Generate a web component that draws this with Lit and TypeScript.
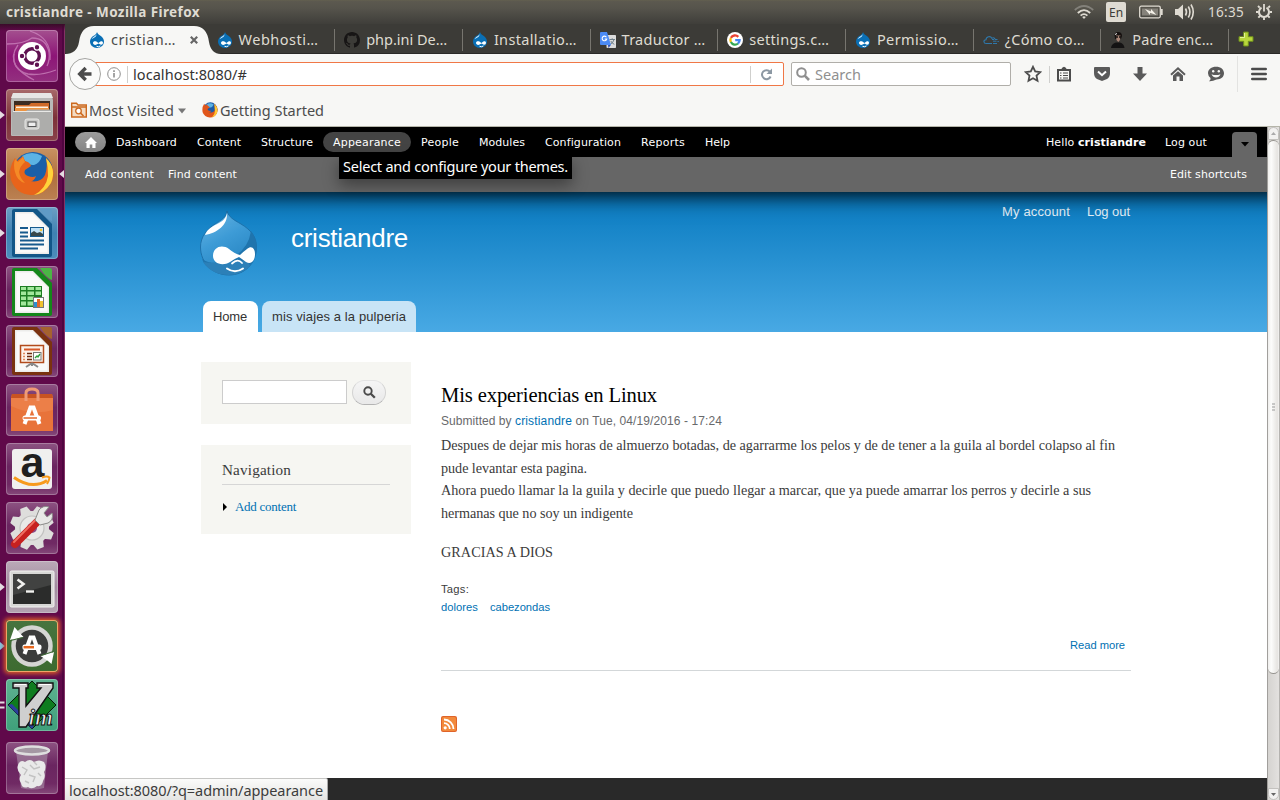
import { LitElement, html, svg, css, nothing } from "lit";
import { customElement, property } from "lit/decorators.js";
import { classMap } from "lit/directives/class-map.js";

/** Inline text whose tracking is adjusted so that the line fills an exact width. */
@customElement("fit-text")
class FitText extends LitElement {
  @property({ type: Number }) w = 0;
  static styles = css`
    :host { display: inline-block; white-space: pre; }
  `;
  firstUpdated() {
    const natural = this.getBoundingClientRect().width;
    const count = (this.textContent || "").length;
    if (this.w && count) {
      this.style.letterSpacing = ((this.w - natural) / count).toFixed(3) + "px";
      this.style.width = this.w + "px";
    }
  }
  render() {
    return html`<slot></slot>`;
  }
}

const t = (text: string, w: number) => html`<fit-text w=${w}>${text}</fit-text>`;

const dropIcon = html`<svg width="16" height="16" viewBox="0 0 16 16">
  <path d="M8 0C8.600 2 10 2.700 11.500 3.800C13.800 5.400 15 7.300 15 9.600C15 13.300 12 16 8 16C4 16 1 13.300 1 9.600C1 7 2.500 5 4.600 3.800C6 3 7.700 2 8 0Z" fill="#0a6fb5"/>
  <path d="M7.400 2.200C7 3.900 3.500 4.800 2.600 7.200C4.500 5.600 7.800 5 7.400 2.200Z" fill="#d8f0ff"/>
  <path d="M4 10.800C4 9.200 6 8.800 7.400 9.600L9.400 11L11.400 9.600C12.600 8.800 14 9.300 14 10.800C14 12.400 12.400 13.200 11.400 12.400L9.600 11.500L7.600 12.600C6 13.400 4 12.700 4 10.800Z" fill="#fff"/>
  <path d="M7.500 14.300Q9.700 15.400 11.400 13.900" stroke="#fff" stroke-width="1" fill="none"/>
</svg>`;

const githubIcon = html`<svg width="16" height="16" viewBox="0 0 16 16"><path fill="#171515" d="M8 0C3.580 0 0 3.580 0 8c0 3.540 2.290 6.530 5.470 7.590.4.070.55-.17.55-.38 0-.19-.01-.82-.01-1.490-2.010.37-2.530-.49-2.690-.94-.09-.23-.48-.94-.82-1.130-.28-.15-.68-.52-.01-.53.63-.01 1.080.58 1.230.82.72 1.210 1.870.87 2.330.66.07-.52.28-.87.51-1.070-1.780-.2-3.640-.89-3.640-3.950 0-.87.31-1.590.82-2.150-.08-.2-.36-1.020.08-2.120 0 0 .67-.21 2.200.82.64-.18 1.320-.27 2-.27s1.360.09 2 .27c1.530-1.040 2.200-.82 2.200-.82.44 1.100.16 1.920.08 2.120.51.56.82 1.270.82 2.150 0 3.070-1.870 3.750-3.650 3.950.29.25.54.73.54 1.480 0 1.070-.01 1.930-.01 2.200 0 .21.15.46.55.38A8.010 8.010 0 0 0 16 8c0-4.420-3.580-8-8-8z"/></svg>`;

const translateIcon = html`<svg width="16" height="16" viewBox="0 0 16 16">
  <rect x="6.500" y="3" width="9.500" height="13" rx=".8" fill="#dcdcdc"/>
  <path d="M9.500 7.500H15M12.200 6.300V7.500M14 7.700Q13 11 10.200 12.300M10.800 9Q12 11.500 14.300 12.300" stroke="#6e7f8a" fill="none"/>
  <path d="M8 13H10.800L8.500 16Z" fill="#2c4fb5"/>
  <path d="M1 0H7L11 13H1Q0 13 0 12V1Q0 0 1 0Z" fill="#4c8bf5"/>
  <path d="M6.400 5.200A2.300 2.300 0 1 0 6.700 7H4.700" stroke="#fff" stroke-width="1.100" fill="none"/>
</svg>`;

const googleIcon = html`<svg width="16" height="16" viewBox="0 0 16 16">
  <circle cx="8" cy="8" r="8" fill="#fff"/>
  <g fill="none" stroke-width="2.300">
    <path d="M11.300 4.900A4.600 4.600 0 0 0 3.900 5.900" stroke="#ea4335"/>
    <path d="M3.900 5.900A4.600 4.600 0 0 0 3.900 10.100" stroke="#fbbc05"/>
    <path d="M3.900 10.100A4.600 4.600 0 0 0 11 11.500" stroke="#34a853"/>
    <path d="M11 11.500A4.500 4.500 0 0 0 12.600 8.100H8.200" stroke="#4285f4"/>
  </g>
</svg>`;

const cloudIcon = html`<svg width="16" height="16" viewBox="0 0 16 16">
  <path d="M9 11.500H3.200C.4 11.500 0 8.200 3 7.800C3 4.500 7.500 3.500 8.800 6.200C10.500 5.300 12 6 12 7.500" fill="none" stroke="#2f78ab" stroke-width="1.100"/>
  <path d="M9 7.500H11M10 9.200H13.500M12 7.500H14.500M14 11.500H10M14.500 9.500H15.800" stroke="#2f78ab" stroke-width="1"/>
</svg>`;

const personIcon = html`<svg width="16" height="16" viewBox="0 0 16 16">
  <path d="M1 16Q1.500 11.500 6 10.500L10 10.500Q14 11.500 14.500 16Z" fill="#141313"/>
  <path d="M4.500 3Q5 0 8 0Q12 0 12 4L11 7H5Z" fill="#15100f"/>
  <path d="M6 3.500H10.500L10 8L8.300 10L6.500 8Z" fill="#a98576"/>
  <path d="M5.500 5H8M9 5H11" stroke="#111" stroke-width="1.600"/>
  <path d="M5 2.500L7 1.500" stroke="#eee"/>
</svg>`;

const tabs = [
  { label: "Webhosti…", w: 80, icon: dropIcon },
  { label: "php.ini De…", w: 81, icon: githubIcon },
  { label: "Installatio…", w: 83, icon: dropIcon },
  { label: "Traductor …", w: 84, icon: translateIcon },
  { label: "settings.c…", w: 80, icon: googleIcon },
  { label: "Permissio…", w: 82, icon: dropIcon },
  { label: "¿Cómo co…", w: 80, icon: cloudIcon },
  { label: "Padre enc…", w: 81, icon: personIcon },
];

const glyph = (body: unknown) => html`<svg width="52" height="52" viewBox="0 0 52 52">${body}</svg>`;

const sheet = (frame: string, fold: string, body: unknown) => glyph(svg`
  <path d="M8 2H31L46 17V48Q46 50 44 50H8Q6 50 6 48V4Q6 2 8 2Z" fill=${frame}/>
  <path d="M34 2H44Q46 2 46 4V14Q40 12 34 2Z" fill=${fold}/>
  <path d="M9 5H27L43 21V47H9Z" fill="#ececea"/>
  <path d="M10.500 6.500H26.500L41.500 21.500V45.500H10.500Z" fill="#fafaf9"/>
  ${body}`);

const launcherItems = [
  {
    name: "dash", bg: "linear-gradient(#a4508f,#8d1577 50%,#93307f)", run: "",
    icon: glyph(svg`
      <g fill="none" stroke="#d08bc2" stroke-width="1.300" opacity=".7">
        <path d="M1 14Q18 14 26 8Q40 8 43 22Q44 30 41 36"/><path d="M24 1Q46 8 44 30"/><path d="M8 24Q6 40 22 44Q34 46 50 40"/><path d="M12 15Q4 26 10 36Q16 44 28 50"/>
      </g>
      <circle cx="26" cy="26" r="14" fill="#fff"/>
      <circle cx="26" cy="26" r="7.300" fill="none" stroke="#5e1150" stroke-width="3.400"/>
      <g fill="#5e1150" stroke="#fff" stroke-width="1.200"><circle cx="16" cy="26" r="2.800"/><circle cx="31" cy="17.300" r="2.800"/><circle cx="31" cy="34.700" r="2.800"/></g>`),
  },
  {
    name: "files", bg: "linear-gradient(#a86a6a,#7d3139 55%,#8a424a)", run: "on",
    icon: glyph(svg`
      <path d="M7 4H45L47 11V46Q47 47 46 47H6Q5 47 5 46V11Z" fill="#b9b9b7"/>
      <path d="M7 4H45L47 9H5Z" fill="#e6e6e4"/>
      <rect x="8" y="12" width="36" height="10" fill="#3c2c22"/>
      <path d="M9 16H23L25 14H43V22H9Z" fill="#cf6a28"/>
      <path d="M10 17.500H42V19H10Z" fill="#fff3e2"/><path d="M9 19H43V22H9Z" fill="#ee9440"/>
      <path d="M6 22H20L22 20.500H44L46 22V46H6Z" fill="#adadab"/><path d="M7 22.500H45" stroke="#e8e8e6"/>
      <rect x="19" y="30" width="14" height="10" rx="2" fill="#c9c9c7" stroke="#e7e7e5"/>
      <rect x="22" y="33" width="8" height="4.500" fill="#eee" stroke="#555"/>`),
  },
  {
    name: "firefox", bg: "linear-gradient(#c89262,#b0703f 55%,#bb8152)", run: "both",
    icon: glyph(svg`
      <circle cx="27" cy="24" r="20" fill="#1a5fa8"/>
      <path d="M16 8Q26 2 36 8Q34 15 28 17Q20 18 16 8Z" fill="#5cb3e4"/>
      <path d="M40 10Q52 22 45 35Q38 48 25 47Q10 46 5 32Q2 20 9 10L11 13L17 8L19 13Q24 14 25 18L19 22Q17 26 22 28Q27 30 30 28Q28 34 24 33Q35 35 39 27Q42 18 40 10Z" fill="#e8641b"/>
      <path d="M40 10Q51 21 45 35Q38 46 28 47Q40 41 42 28Q42 18 40 10Z" fill="#ffd23a"/>
      <path d="M9 11L12 14L17 9L19 14Q14 18 13 24Q14 30 19 35Q11 33 9 24Q7 17 9 11Z" fill="#f58a26"/>`),
  },
  {
    name: "writer", bg: "linear-gradient(#6d9fc4,#3f82b3 50%,#4c8dbb)", run: "on",
    icon: sheet("#125687", "#5f9bc6", svg`
      <path d="M14 21H22M14 25.500H22M14 29.500H22M14 33.500H38M14 37.500H38M14 41.500H32" stroke="#175a8d" stroke-width="2"/>
      <rect x="24.500" y="20.500" width="13" height="9" fill="#bfe0f5" stroke="#175a8d"/>
      <path d="M25 29V26L28 24L31 26L34 25L37 27V29Z" fill="#37474b"/><circle cx="35" cy="23" r="1.300" fill="#f4c435"/>`),
  },
  {
    name: "calc", bg: "", run: "",
    icon: sheet("#14861a", "#4bb545", svg`
      <rect x="14" y="20" width="22" height="21" fill="#1d7d22"/>
      <path d="M15 21H20V24H15ZM21.500 21H28V24H21.500ZM29.500 21H35V24H29.500ZM15 25.500H20V29H15ZM21.500 25.500H28V29H21.500ZM29.500 25.500H35V29H29.500ZM15 30.500H20V34H15ZM21.500 30.500H28V34H21.500ZM15 35.500H20V39.500H15ZM21.500 35.500H28V39.500H21.500Z" fill="#a2e89b"/>
      <rect x="27.500" y="31.500" width="10" height="10" fill="#fff" stroke="#777"/>
      <path d="M28 36H31V41H28Z" fill="#2e8fd0"/><path d="M31 33H34V41H31Z" fill="#e2682b"/><path d="M34 35H37V41H34Z" fill="#f0c22f"/>`),
  },
  {
    name: "impress", bg: "", run: "",
    icon: sheet("#7a3210", "#a5622f", svg`
      <rect x="14.500" y="20.500" width="23" height="17" fill="#fdf3ea" stroke="#b24b1c" stroke-width="1.500"/>
      <path d="M18 24.500H34" stroke="#d6592a" stroke-width="2"/>
      <path d="M17 28.500H19M17 31.500H19M17 34.500H19" stroke="#e08a5c" stroke-width="1.500"/><path d="M21 28.500H26M21 31.500H26M21 34.500H26" stroke="#6f2c10" stroke-width="1.600"/>
      <rect x="27.500" y="27.500" width="7.500" height="7.500" fill="#fff" stroke="#777"/><path d="M29 33L31 31L32 32L34 29" stroke="#2c9d3b" stroke-width="1.400" fill="none"/>
      <path d="M26 38L20 42M26 38L32 42M26 38V41" stroke="#888" stroke-width="2"/>`),
  },
  {
    name: "software", bg: "", run: "",
    icon: glyph(svg`
      <path d="M6 10H46L47 14V47H5V14Z" fill="#e8733a"/><path d="M5 14H47V26Q26 32 5 22Z" fill="#ec7f48"/>
      <path d="M6 10H46L47 14H5Z" fill="#c85322"/>
      <path d="M20 17V9Q20 5 26 5Q32 5 32 9V17" fill="none" stroke="#ef9b76" stroke-width="3"/>
      <path d="M18.500 40L24.500 23.500H27.500L33.500 40" fill="none" stroke="#fff" stroke-width="4"/>
      <rect x="16.500" y="31.500" width="18.500" height="5" rx="2.500" fill="#fff"/><path d="M17.500 34H31" stroke="#e5682c" stroke-width="1.500"/>`),
  },
  {
    name: "amazon", bg: "", run: "",
    icon: glyph(svg`
      <rect x="6" y="6" width="40" height="40" rx="3" fill="#f0f0ef"/>
      <text x="26.500" y="34" text-anchor="middle" font-family="Liberation Sans" font-weight="700" font-size="43" fill="#1f1f1f">a</text>
      <path d="M8 34.500Q26 47 41 37.500" fill="none" stroke="#f79a1c" stroke-width="3"/><path d="M36 34.500Q41 32.500 43.500 34.500Q43 38 41 41" fill="none" stroke="#f79a1c" stroke-width="2"/>`),
  },
  {
    name: "settings", bg: "", run: "",
    icon: glyph(svg`
      <g fill="#dededc"><circle cx="26" cy="26" r="17"/>
      ${[22, 67, 112, 157, 202, 247, 292, 337].map((a) => svg`<path d="M22.500 4H29.500L32 12H20Z" transform=${`rotate(${a} 26 26)`}/>`)}</g>
      <circle cx="26" cy="26" r="12" fill="#e9e9e7" stroke="#c2c2c0" stroke-width="1.200"/>
      <circle cx="26" cy="26" r="5" fill="#8b4a85"/>
      <path d="M9 42L31 20" stroke="#c6201f" stroke-width="8" stroke-linecap="round"/><path d="M8 40L29 18.500" stroke="#ef6d61" stroke-width="2" stroke-linecap="round"/>
      <path d="M29 18L33 8Q37 3 43 5L38 11L41 15L46 11Q48 18 42 21L34 23Z" fill="#e8e8e6" stroke="#8b8b89"/>`),
  },
  {
    name: "terminal", bg: "linear-gradient(#bba9b8,#a18b9e 50%,#b3a3b1)", run: "on",
    icon: glyph(svg`
      <rect x="4" y="10" width="44" height="36" rx="1.500" fill="#d8d8d6" stroke="#f3f3f1"/>
      <rect x="7" y="13" width="38" height="30" fill="#2b2c2b"/><path d="M7 13H45V24L7 34Z" fill="#414241"/>
      <path d="M11.500 18.500L17.500 23L11.500 27.500" fill="none" stroke="#f2f2f0" stroke-width="2.600"/><path d="M20 30.500H28" stroke="#f2f2f0" stroke-width="2.400"/>`),
  },
  {
    name: "updater", bg: "linear-gradient(#47743f,#3d6b30)", run: "blue",
    icon: glyph(svg`
      <circle cx="26" cy="26" r="18.500" fill="#3b3c3b" stroke="#d5d5d3" stroke-width="4.500"/>
      <path d="M4 20L8.500 7L11 10L17.500 17Z" fill="#fff"/><path d="M48 32L45.500 44L42 41L34.500 36Z" fill="#fff"/>
      <path d="M4.500 20.500L17 17.500M47.500 31.500L35 35.500" stroke="#3f6b36" stroke-width="1.200"/>
      <path d="M18.500 34L24.500 17.500H27.500L33.500 34" fill="none" stroke="#fff" stroke-width="4"/>
      <rect x="16.500" y="24.500" width="19" height="5.500" rx="2" fill="#fff"/><path d="M17.500 27.200H28" stroke="#e8681f" stroke-width="2.500"/>`),
  },
  {
    name: "vim", bg: "linear-gradient(#5fb391,#3fa07b)", run: "two",
    icon: glyph(svg`
      <path d="M26 2L50 26L26 50L2 26Z" fill="#0e7c1f" stroke="#061a08"/><path d="M2 26L26 50L28 47L6 25Z" fill="#2b3f9b"/>
      <path d="M7 4H22V9H20V27L35 9H31V4H47V9L20 48H13V9H7Z" fill="#cfcfcf" stroke="#111" stroke-width="1.400"/>
      <path d="M9 5.500H20" stroke="#fff"/><path d="M33 5.500H45" stroke="#fff"/>
      <text x="22.500" y="45.500" font-family="Liberation Serif" font-style="italic" font-weight="700" font-size="23" fill="#eee" stroke="#111" stroke-width="1">im</text>`),
  },
  {
    name: "trash", bg: "", run: "",
    icon: glyph(svg`
      <path d="M10 9H42L38 46Q26 49 15 46Z" fill="#a3849f" opacity=".7"/>
      <path d="M12 23Q14 17 19 20Q24 16 28 20Q33 17 38 20Q41 25 38 30Q40 35 37 39Q36 45 31 44Q26 48 22 45Q16 47 15 41Q12 37 15 33Q10 28 12 23Z" fill="#e9e9e9"/>
      <path d="M16 25L21 28L18 33M24 23L28 27L34 25M23 33L29 35L27 40M32 31L35 34M19 39L23 41M28 20L31 23" stroke="#c2c2c2" stroke-width="1.400" fill="none"/>
      <ellipse cx="26" cy="8.500" rx="17" ry="4" fill="#a497a3" stroke="#dedede" stroke-width="2.500"/>`),
  },
];

@customElement("unity-panel")
class UnityPanel extends LitElement {
  static styles = css`
    :host { display: flex; height: 24px; align-items: center; color: #dfdbd2; font: 700 13.500px/24px "Noto Sans", sans-serif;
      background: linear-gradient(#65624f 0, #5c594f 1px, #56544c 8px, #3f3e3a); padding: 0 8px 0 6px; }
    .title { flex: 1; }
    .tray { display: flex; align-items: center; font-weight: 400; }
    svg { display: block; }
    .lang { width: 20px; height: 20px; background: #dfdbd2; border-radius: 2px; color: #3c3b37; font-size: 12px; line-height: 21px; text-align: center; margin: 0 13px 0 12px; }
    .vol { margin: 0 13px 0 12px; }
    .clock { margin-right: 12px; }
  `;
  render() {
    return html`
      <div class="title">${t("cristiandre - Mozilla Firefox", 194)}</div>
      <div class="tray">
        <svg width="20" height="14" viewBox="0 0 20 14" fill="none" stroke-width="1.800">
          <path d="M.8 5Q10-3 19.200 5" stroke="#83817a"/><path d="M3.800 8Q10 2.200 16.200 8" stroke="#dfdbd2"/><path d="M6.600 10.700Q10 7.500 13.400 10.700" stroke="#dfdbd2"/><path d="M8.200 12L10 14L11.800 12Q10 10.700 8.200 12Z" fill="#dfdbd2" stroke="none"/>
        </svg>
        <div class="lang">${t("En", 14)}</div>
        <svg width="24" height="14" viewBox="0 0 24 14"><rect x=".7" y="1.200" width="20.600" height="11.600" rx="1.500" fill="none" stroke="#dfdbd2" stroke-width="1.300"/><rect x="22" y="4" width="1.700" height="6" fill="#dfdbd2"/><rect x="3" y="3.500" width="16" height="7" fill="#85827a"/><path d="M6 4L12 6.500L12 4L17.500 10L11 7.800V10Z" fill="#f4f1e8"/></svg>
        <svg class="vol" width="20" height="18" viewBox="0 0 20 18"><path d="M0 6H3L8 1.500V16.500L3 12H0Z" fill="#dfdbd2"/><g fill="none" stroke="#dfdbd2" stroke-width="1.600"><path d="M10.500 5.500Q12.500 9 10.500 12.500"/><path d="M13.300 3.500Q16.500 9 13.300 14.500"/><path d="M16 1.500Q20.500 9 16 16.500"/></g></svg>
        <div class="clock">${t("16:35", 36)}</div>
        <svg width="16" height="16" viewBox="0 0 16 16" fill="none" stroke="#dfdbd2">
          <path d="M5.500 3.700A5 5 0 1 0 10.500 3.700" stroke-width="2"/><path d="M8 0V7.500" stroke-width="1.800"/>
          <path d="M3.700 3.700L2 2M12.300 3.700L14 2M2.500 8H0M13.500 8H16M4 12L2.300 13.700M12 12L13.700 13.700M8 13.500V16" stroke-width="1.900"/>
        </svg>
      </div>`;
  }
}

@customElement("unity-launcher")
class UnityLauncher extends LitElement {
  static styles = css`
    :host { display: flex; flex-direction: column; gap: 7px; box-sizing: border-box; width: 65px; height: 776px; padding-top: 6px;
      background: linear-gradient(#3a0b29 0, rgba(0,0,0,0) 7px), linear-gradient(90deg, #60094a 0 62px, #500540 62px 64px, #843266 64px); }
    .row { display: flex; align-items: center; height: 52px; }
    .row.trash { margin-top: 4px; }
    .mark { width: 6px; height: 12px; flex: none; }
    .mark svg { display: block; }
    .tile { position: relative; width: 52px; height: 52px; border-radius: 4px; flex: none;
      background: linear-gradient(#8d5382, #6a2560 45%, #702a64 80%, #85497a); }
    .tile::after { content: ""; position: absolute; inset: 0; border-radius: 4px; box-shadow: inset 0 0 0 1px rgba(255,255,255,.25); }
    .tile svg { display: block; overflow: visible; }
    .urgent { box-shadow: 0 0 4px 2px #d65a2a; border-radius: 3px; }
    .urgent::after { box-shadow: inset 0 0 0 1px #f0a468; }
  `;
  mark(run: string) {
    if (run === "two") return html`<svg width="5" height="12" viewBox="0 0 5 12"><path d="M0 3.500H4.500M0 8.500H4.500" stroke="#e5dce2" stroke-width="2.200"/></svg>`;
    if (!run) return nothing;
    return html`<svg width="5" height="12" viewBox="0 0 5 12"><path d="M0 2L4.800 6L0 10Z" fill=${run === "blue" ? "#7fc6e8" : "#e5dce2"}/></svg>`;
  }
  render() {
    return launcherItems.map((it) => html`
      <div class=${classMap({ row: true, trash: it.name === "trash" })}>
        <div class="mark">${this.mark(it.run)}</div>
        <div class=${classMap({ tile: true, urgent: it.name === "updater" })} style=${it.bg ? `background:${it.bg}` : ""}>${it.icon}</div>
        ${it.run === "both" ? html`<svg width="6" height="12" viewBox="0 0 6 12"><path d="M6 2L1.200 6L6 10Z" fill="#e5dce2"/></svg>` : nothing}
      </div>`);
  }
}

@customElement("firefox-chrome")
class FirefoxChrome extends LitElement {
  static styles = css`
    :host { display: block; font: 14.500px/20px "Noto Sans", sans-serif; color: #3c3c3c; }
    svg { display: block; flex: none; }
    .tabs { display: flex; height: 30px; background: #3c3b37; color: #dfdbd2; box-shadow: inset 0 -1px #2a2927; }
    .active { position: relative; width: 154px; height: 30px; display: flex; align-items: center; color: #4c4c4c; }
    .shape { position: absolute; left: 0; top: 0; }
    .active > .inner { position: relative; display: flex; align-items: center; padding: 2px 0 0 24px; }
    .label { margin: -2px 0 0 6px; }
    .close { margin-left: 14px; }
    .tab { display: flex; align-items: center; box-sizing: border-box; width: 127.700px; padding: 2px 0 0 10px; position: relative; }
    .strip { display: flex; margin-left: -12.500px; }
    .tab::after { content: ""; position: absolute; right: -1px; top: 5px; height: 22px; width: 1px; background: #77756f; }
    .plus { align-self: center; margin-left: 10px; }
    .nav { display: flex; align-items: center; height: 40px; background: #f7f7f5; padding: 0 13px 0 4px; box-sizing: border-box; }
    .back { width: 30px; height: 30px; border: 1px solid #a5a5a2; border-radius: 50%; background: #fbfbfa; display: grid; place-items: center; z-index: 1; flex: none; }
    .url { display: flex; align-items: center; box-sizing: border-box; width: 699px; height: 24px; margin-left: -16px; padding-left: 21px; border: 1px solid #f07746; border-radius: 2px; background: #fff; color: #333; flex: none; }
    .vr { width: 1px; height: 17px; background: #cfcfcd; }
    .gapped { margin-left: 6px; }
    .url .addr { flex: 1; margin-left: 5px; }
    .url .reload { margin: 0 10px 0 9px; }
    .search { display: flex; align-items: center; box-sizing: border-box; width: 220px; height: 24px; margin-left: 7px; border: 1px solid #b0aea9; border-radius: 2px; background: #fff; color: #8f8f8f; padding-left: 4px; gap: 5px; flex: none; }
    .tools { flex: 1; display: flex; align-items: center; gap: 22px; margin-left: 13px; }
    .tools .pair { display: flex; align-items: center; gap: 6.500px; }
    .tools .tall { height: 36px; background: #e3e3e1; width: 1px; margin: 0 -9px; }
    .marks { display: flex; align-items: center; height: 32px; background: #f7f7f5; border-bottom: 1px solid #b5b5a9; padding-left: 6px; color: #4c4c4c; }
    .marks .txt { margin-left: 2px; }
    .caret { margin: 1px 16px 0 4px; }
  `;
  render() {
    return html`
      <div class="tabs">
        <div class="active">
          <svg class="shape" width="156" height="30" viewBox="0 0 156 30"><path d="M0 30Q12 30 14 18Q16 2 29 2H129Q142 2 144 18Q146 30 156 30Z" fill="#f7f7f5"/></svg>
          <div class="inner">${dropIcon}<span class="label">${t("cristian…", 65)}</span>
            <svg class="close" width="8" height="8" viewBox="0 0 8 8"><path d="M.8.8L7.200 7.200M7.200.8L.8 7.200" stroke="#666" stroke-width="2.200"/></svg></div>
        </div>
        <div class="strip">
          ${tabs.map((x) => html`<div class="tab">${x.icon}<span class="label">${t(x.label, x.w)}</span></div>`)}
        </div>
        <svg class="plus" width="16" height="16" viewBox="0 0 16 16"><path d="M5.700 1H10.300V5.700H15V10.300H10.300V15H5.700V10.300H1V5.700H5.700Z" fill="#b9d73c" stroke="#6f8f1c"/><path d="M6.500 2V6.500H2" stroke="#e3f29a" fill="none"/></svg>
      </div>
      <div class="nav">
        <div class="back"><svg width="16" height="16" viewBox="0 0 16 16"><path d="M14.500 8H4M8.700 2L2.700 8L8.700 14" fill="none" stroke="#4c4c4c" stroke-width="3.400"/></svg></div>
        <div class="url">
          <svg width="14" height="14" viewBox="0 0 14 14"><circle cx="7" cy="7" r="6.300" fill="none" stroke="#8e8e8e"/><path d="M7 6V10.500M7 3.300V5" stroke="#8e8e8e" stroke-width="1.600"/></svg>
          <div class="vr gapped"></div>
          <div class="addr">${t("localhost:8080/#", 114)}</div>
          <div class="vr"></div>
          <svg class="reload" width="13" height="13" viewBox="0 0 13 13"><path d="M10 3.800A4.500 4.500 0 1 0 10.600 8.500" fill="none" stroke="#8c98a3" stroke-width="2"/><path d="M12 .5V6H6.500Z" fill="#8c98a3"/></svg>
        </div>
        <div class="search">
          <svg width="14" height="14" viewBox="0 0 14 14"><circle cx="5.500" cy="5.500" r="4.300" fill="none" stroke="#8f8f8f" stroke-width="2"/><path d="M8.700 8.700L13 13" stroke="#8f8f8f" stroke-width="2.600"/></svg>
          ${t("Search", 46)}
        </div>
        <div class="tools">
          <div class="pair">
            <svg width="18" height="18" viewBox="0 0 18 18"><path d="M9 1.800L11.200 6.500L16.300 7.100L12.500 10.600L13.500 15.700L9 13.200L4.500 15.700L5.500 10.600L1.700 7.100L6.800 6.500Z" fill="none" stroke="#4c4c4c" stroke-width="1.800"/></svg>
            <div class="vr"></div>
            <svg width="16" height="16" viewBox="0 0 16 16"><path d="M2 4H14V14.500H2Z" fill="none" stroke="#4c4c4c" stroke-width="2"/><path d="M5 3.500Q8-2 11 3.500Z" fill="#4c4c4c"/><path d="M4 7H5.500M7 7H12M4 9.500H5.500M7 9.500H12M4 12H5.500M7 12H12" stroke="#4c4c4c" stroke-width="1.200"/></svg>
          </div>
          <svg width="16" height="16" viewBox="0 0 16 16"><path d="M1 1H15Q16 1 16 2V7Q16 11 13 13L8 15L3 13Q0 11 0 7V2Q0 1 1 1Z" fill="#5a5a5a"/><path d="M4 5.500L8 9.200L12 5.500" fill="none" stroke="#fff" stroke-width="2"/></svg>
          <svg width="16" height="16" viewBox="0 0 16 16"><path d="M5.500 1H10.500V7.500H15L8 15L1 7.500H5.500Z" fill="#5a5a5a"/></svg>
          <svg width="16" height="16" viewBox="0 0 16 16"><path d="M1 8.800L8 2.300L15 8.800" fill="none" stroke="#5a5a5a" stroke-width="2"/><path d="M3 9.500L8 5.200L13 9.500V15H9.500V10.500H6.500V15H3Z" fill="#5a5a5a"/></svg>
          <svg width="16" height="16" viewBox="0 0 16 16"><path d="M8 .8C12.800.8 16 3.500 16 7.300S12.800 13.500 8.500 13.500Q4.500 15.500 1 15.200Q3 13.700 2.500 12Q0 10 0 7.200C0 3.500 3.500.8 8 .8Z" fill="#5a5a5a"/><circle cx="5.200" cy="5.200" r="1.200" fill="#f7f7f5"/><circle cx="10.800" cy="5.200" r="1.200" fill="#f7f7f5"/><path d="M3.500 8.200Q8 10 12.500 8.200Q11 11.500 8 11.500T3.500 8.200Z" fill="#f7f7f5"/></svg>
          <div class="tall"></div>
          <svg width="16" height="14" viewBox="0 0 16 14"><path d="M1.300 2H14.700M1.300 7H14.700M1.300 12H14.700" stroke="#4c4c4c" stroke-width="2.600" stroke-linecap="round"/></svg>
        </div>
      </div>
      <div class="marks">
        <svg width="16" height="16" viewBox="0 0 16 16"><path d="M.7 15V1.200H5.500L7 3H15.300V15Z" fill="#f3dcc4" stroke="#cd6a1f" stroke-width="1.400"/><path d="M1 5H15" stroke="#cd6a1f" stroke-width="1.500"/><circle cx="7.500" cy="9" r="2.800" fill="#fff" stroke="#cd6a1f" stroke-width="1.300"/><path d="M9.500 11L12.500 14" stroke="#cd6a1f" stroke-width="1.700"/></svg>
        <span class="txt">${t("Most Visited", 85)}</span>
        <svg class="caret" width="8" height="6" viewBox="0 0 8 6"><path d="M0 .5H8L4 5.500Z" fill="#777"/></svg>
        <svg width="16" height="16" viewBox="0 0 52 52">
          <circle cx="27" cy="24" r="23" fill="#1d5aa6"/><path d="M14 8Q26 0 38 8Q34 17 28 18Q18 18 14 8Z" fill="#5cb3e4"/>
          <path d="M40 6Q56 20 48 37Q40 51 25 50Q8 49 2 33Q-1 18 7 6L11 11L17 7L19 13Q24 14 25 18L19 22Q17 26 22 28Q27 30 30 28Q28 35 22 33Q36 37 41 28Q43 20 40 6Z" fill="#e0561b"/><path d="M40 6Q55 21 48 37Q42 48 32 50Q43 40 42 28Z" fill="#ffc832"/></svg>
        <span class="txt">${t("Getting Started", 104)}</span>
      </div>`;
  }
}

const adminLinks: [string, number][] = [
  ["Dashboard", 61], ["Content", 44], ["Structure", 52], ["Appearance", 68], ["People", 38],
  ["Modules", 46], ["Configuration", 76], ["Reports", 44], ["Help", 25],
];

@customElement("drupal-page")
class DrupalPage extends LitElement {
  static styles = css`
    :host { display: flex; flex-direction: column; position: relative; width: 1202px; height: 673px; overflow: hidden; background: #fff; font-family: "Liberation Sans", sans-serif; }
    svg { display: block; flex: none; }
    .toolbar { margin: 0 -20px; position: relative; z-index: 2; box-shadow: 0 3px 20px #000; font: 11px/20px "DejaVu Sans", sans-serif; color: #fff; }
    .menu { display: flex; align-items: center; height: 30px; background: #000; padding: 0 30px; }
    .home { width: 31px; height: 20px; border-radius: 10px; background: linear-gradient(#9c9c9c, #848484); display: grid; place-items: center; }
    .link { padding: 0 10px; height: 20px; line-height: 21px; border-radius: 10px; }
    .link.on { background: #444; }
    .user { margin-left: auto; display: flex; gap: 19px; line-height: 21px; }
    .user b { font-weight: 700; }
    .toggle { align-self: flex-end; width: 25px; height: 25px; margin-left: 25px; border-radius: 4px 4px 0 0; background: #666; display: grid; place-items: center; }
    .drawer { display: flex; align-items: center; gap: 14px; height: 35px; box-sizing: border-box; background: #666; padding: 0 40px; color: #fefefe; }
    .drawer .edit { margin-left: auto; }
    .tip { position: absolute; z-index: 3; left: 274px; top: 29px; width: 233px; height: 23px; box-sizing: border-box; padding-left: 4px; background: #000; color: #fff; font: 14.500px/20px "Noto Sans", sans-serif; box-shadow: 0 6px 16px rgba(0,0,0,.4); }
    .header { height: 140px; background: linear-gradient(#0779bf, #48a9e4); }
    .wrap { width: 930px; margin-left: 136px; }
    .brand { display: flex; align-items: flex-start; height: 109px; }
    .logo { margin: 18px 0 0 -3px; }
    .name { margin: 31px 0 0 29px; font-size: 26px; line-height: 30px; color: #fff; }
    .account { margin: 10px 1px 0 auto; display: flex; gap: 17px; font-size: 13px; line-height: 20px; color: #e6f2fa; }
    .mainmenu { display: flex; gap: 4px; padding-left: 2px; font-size: 13px; line-height: 31px; color: #333; }
    .mtab { padding: 0 10px; height: 31px; border-radius: 8px 8px 0 0; background: #c8e4f6; }
    .mtab.on { background: #fff; padding-right: 11px; }
    .body { display: flex; flex: 1; padding-top: 30px; align-items: flex-start; }
    .side { width: 210px; display: flex; flex-direction: column; gap: 21px; font-family: "Liberation Serif", serif; }
    .block { background: #f6f6f2; box-sizing: border-box; padding: 0 21px; }
    .find { height: 62px; display: flex; align-items: flex-start; gap: 5px; padding-top: 18px; }
    .input { box-sizing: border-box; width: 125px; height: 24px; border: 1px solid #ccc; background: #fff; }
    .go { box-sizing: border-box; width: 34px; height: 25px; border: 1px solid #e4e4e4; border-bottom-color: #b4b4b4; border-left-color: #d2d2d2; border-right-color: #d2d2d2; border-radius: 13px; background: linear-gradient(#f5f5f5, #e9e9e9); display: grid; place-items: center; }
    .navb { height: 89px; padding-top: 14px; }
    .navb h2 { margin: 0; font-weight: 400; font-size: 15.200px; line-height: 22px; height: 25px; color: #3b3b3b; border-bottom: 1px solid #d6d6d6; width: 168px; }
    .item { display: flex; align-items: center; gap: 8px; margin-top: 12px; font-size: 13px; line-height: 20px; color: #0071b3; }
    .main { width: 690px; margin-left: 30px; padding-top: 20px; }
    h1 { margin: 0; font: 400 20.600px/26px "Liberation Serif", serif; color: #000; }
    .meta { font-size: 12px; line-height: 18px; height: 18px; margin-top: 4px; color: #68696b; display: flex; }
    .blue { color: #0071b3; }
    .copy { font: 14.200px/22.600px "Liberation Serif", serif; color: #3b3b3b; margin-top: 4px; }
    .copy div { height: 22.600px; }
    .copy .thanks { margin-top: 17px; }
    .tags { font-size: 11.200px; line-height: 18px; margin-top: 16px; color: #3b3b3b; }
    .tags .row { display: flex; gap: 12px; }
    .tags .row, .more { color: #0071b3; }
    .more { display: flex; justify-content: flex-end; font-size: 11.200px; line-height: 18px; padding: 20px 6px 16px 0; border-bottom: 1px solid #d3d7d9; }
    .feed { margin-top: 45px; }
    .footer { height: 22px; background: #292929; }
    .status { position: absolute; z-index: 4; left: 0; bottom: 0; width: 263px; height: 22px; box-sizing: border-box; border-top: 1px solid #c6c6c4; border-right: 1px solid #aaa; border-top-right-radius: 2px; background: linear-gradient(#fbfbfa, #e4e4e2); padding-left: 4px; font: 14.500px/22px "Noto Sans", sans-serif; color: #3c3c3c; }
  `;
  render() {
    return html`
      <div class="toolbar">
        <div class="menu">
          <div class="home"><svg width="12" height="11" viewBox="0 0 12 11"><path d="M6 0L12 6H10.500V11H7.300V7.500H4.700V11H1.500V6H0Z" fill="#fff"/></svg></div>
          ${adminLinks.map(([label, w]) => html`<div class=${classMap({ link: true, on: label === "Appearance" })}>${t(label, w)}</div>`)}
          <div class="user"><span>${t("Hello ", 32)}<b>${t("cristiandre", 68)}</b></span>${t("Log out", 42)}</div>
          <div class="toggle"><svg width="8" height="5" viewBox="0 0 8 5"><path d="M0 0H8L4 4.500Z" fill="#000"/></svg></div>
        </div>
        <div class="drawer">${t("Add content", 69)}${t("Find content", 69)}<span class="edit">${t("Edit shortcuts", 77)}</span></div>
      </div>
      <div class="tip">${t("Select and configure your themes.", 225)}</div>
      <div class="header">
        <div class="wrap">
          <div class="brand">
            <svg class="logo" width="64" height="68" viewBox="0 0 64 68">
              <defs>
                <linearGradient id="drop" x1="0" y1="0" x2=".5" y2="1"><stop offset="0" stop-color="#6fb9e6"/><stop offset=".5" stop-color="#3d9bd6"/><stop offset="1" stop-color="#2583c0"/></linearGradient>
              </defs>
              <path d="M29 1C30.500 7 36 10 43 14C53 20 58.500 27 58.500 37C58.500 54 46 65 31 65C15 65 2.500 53 2.500 37C2.500 27 9 19 17 14C23 10 28 8 29 1Z" fill="url(#drop)" stroke="#1c6da6" stroke-width=".9"/>
              <path d="M53 21C58 28 58.500 33 58.500 37C58.500 54 46 65 31 65C17 65 7 57 4 49Q14 56 28 51Q50 42 53 21Z" fill="#1f74ad"/>
              <path d="M5 52Q16 54 24 51L50 51L52 56Q43 65 31 65Q14 65 5 52Z" fill="#2c80b8"/>
              <path d="M29 3C30 15 19 23 7 25C9 19 15 16 20 13.500C25 11 28 8 29 3Z" fill="#fff"/>
              <path d="M15 46C15 37 24 34 31 39Q37 44 42 45Q45 42 49 39C54 35 57 39 57 44C57 51 53 55 48 52Q44 49 41 47Q36 49 32 52C24 57 15 53 15 46Z" fill="#fff"/>
              <path d="M34 53.500Q40 48 44 53" stroke="#fff" stroke-width="1.800" fill="none" stroke-linecap="round"/><path d="M29 58.500Q37 64 45 58.500" stroke="#fff" stroke-width="2" fill="none" stroke-linecap="round"/>
            </svg>
            <div class="name">${t("cristiandre", 117)}</div>
            <div class="account">${t("My account", 68)}${t("Log out", 43)}</div>
          </div>
          <div class="mainmenu"><div class="mtab on">${t("Home", 34)}</div><div class="mtab">${t("mis viajes a la pulperia", 134)}</div></div>
        </div>
      </div>
      <div class="wrap body">
        <div class="side">
          <div class="block find"><div class="input"></div>
            <div class="go"><svg width="13" height="13" viewBox="0 0 13 13"><circle cx="5" cy="5" r="3.700" fill="none" stroke="#4a4a4a" stroke-width="1.900"/><path d="M7.800 7.800L11.800 11.800" stroke="#4a4a4a" stroke-width="2.300"/></svg></div></div>
          <div class="block navb"><h2>${t("Navigation", 69)}</h2>
            <div class="item"><svg width="5" height="8" viewBox="0 0 5 8"><path d="M1 0L5 4L1 8Z" fill="#000"/></svg>${t("Add content", 61)}</div></div>
        </div>
        <div class="main">
          <h1>${t("Mis experiencias en Linux", 216)}</h1>
          <div class="meta">${t("Submitted by ", 74)}<span class="blue">${t("cristiandre", 57)}</span>${t(" on Tue, 04/19/2016 - 17:24", 150)}</div>
          <div class="copy">
            <div>${t("Despues de dejar mis horas de almuerzo botadas, de agarrarme los pelos y de de tener a la guila al bordel colapso al fin", 674)}</div>
            <div>${t("pude levantar esta pagina.", 146)}</div>
            <div>${t("Ahora puedo llamar la la guila y decirle que puedo llegar a marcar, que ya puede amarrar los perros y decirle a sus", 650)}</div>
            <div>${t("hermanas que no soy un indigente", 192)}</div>
            <div class="thanks">${t("GRACIAS A DIOS", 112)}</div>
          </div>
          <div class="tags"><div>${t("Tags:", 28)}</div><div class="row">${t("dolores", 37)}${t("cabezondas", 60)}</div></div>
          <div class="more">${t("Read more", 55)}</div>
          <svg class="feed" width="16" height="16" viewBox="0 0 16 16"><rect width="16" height="16" rx="2" fill="#e0642a"/><rect x="1" y="1" width="14" height="14" rx="1.500" fill="#f28a3c"/><circle cx="4.200" cy="11.800" r="1.600" fill="#fff"/><path d="M3 7.200A5.800 5.800 0 0 1 8.800 13M3 3.500A9.500 9.500 0 0 1 12.500 13" fill="none" stroke="#fff" stroke-width="1.800"/></svg>
        </div>
      </div>
      <div class="footer"></div>
      <div class="status">${t("localhost:8080/?q=admin/appearance", 254)}</div>`;
  }
}

@customElement("gtk-scrollbar")
class GtkScrollbar extends LitElement {
  static styles = css`
    :host { display: flex; flex-direction: column; width: 13px; height: 673px; box-sizing: border-box; background: linear-gradient(90deg, #d5d3d0, #e3e1df); border-left: 1px solid #a19f9c; border-right: 1px solid #b5b3b0; }
    .btn { height: 12px; display: grid; place-items: center; background: #f2f1f0; border: 1px solid #c3c1be; box-sizing: border-box; }
    .btn.up { border-radius: 6px 6px 0 0; height: 13px; }
    .btn.down { border-radius: 0 0 6px 6px; }
    .thumb { height: 534px; box-sizing: border-box; border: 1px solid #96948f; border-width: 1px 0; border-radius: 6px; background: linear-gradient(90deg, #f0efed, #fcfcfb 30%, #e6e4e1 85%, #f4f3f2); display: grid; place-items: center; }
    .gap { flex: 1; }
  `;
  render() {
    return html`
      <div class="btn up"><svg width="5" height="3" viewBox="0 0 5 3"><path d="M0 3H5L2.500 0Z" fill="#aaa"/></svg></div>
      <div class="thumb"><svg width="3" height="8" viewBox="0 0 3 8"><path d="M0 1H3M0 4H3M0 7H3" stroke="#999"/></svg></div>
      <div class="gap"></div>
      <div class="btn down"><svg width="5" height="3" viewBox="0 0 5 3"><path d="M0 0H5L2.500 3Z" fill="#666"/></svg></div>`;
  }
}

@customElement("app-root")
class AppRoot extends LitElement {
  static styles = css`
    :host { display: block; width: 1280px; height: 800px; overflow: hidden; }
    .desk { display: flex; }
    .window { width: 1215px; }
    .view { display: flex; }
  `;
  render() {
    return html`
      <unity-panel></unity-panel>
      <div class="desk">
        <unity-launcher></unity-launcher>
        <div class="window">
          <firefox-chrome></firefox-chrome>
          <div class="view"><drupal-page></drupal-page><gtk-scrollbar></gtk-scrollbar></div>
        </div>
      </div>`;
  }
}
